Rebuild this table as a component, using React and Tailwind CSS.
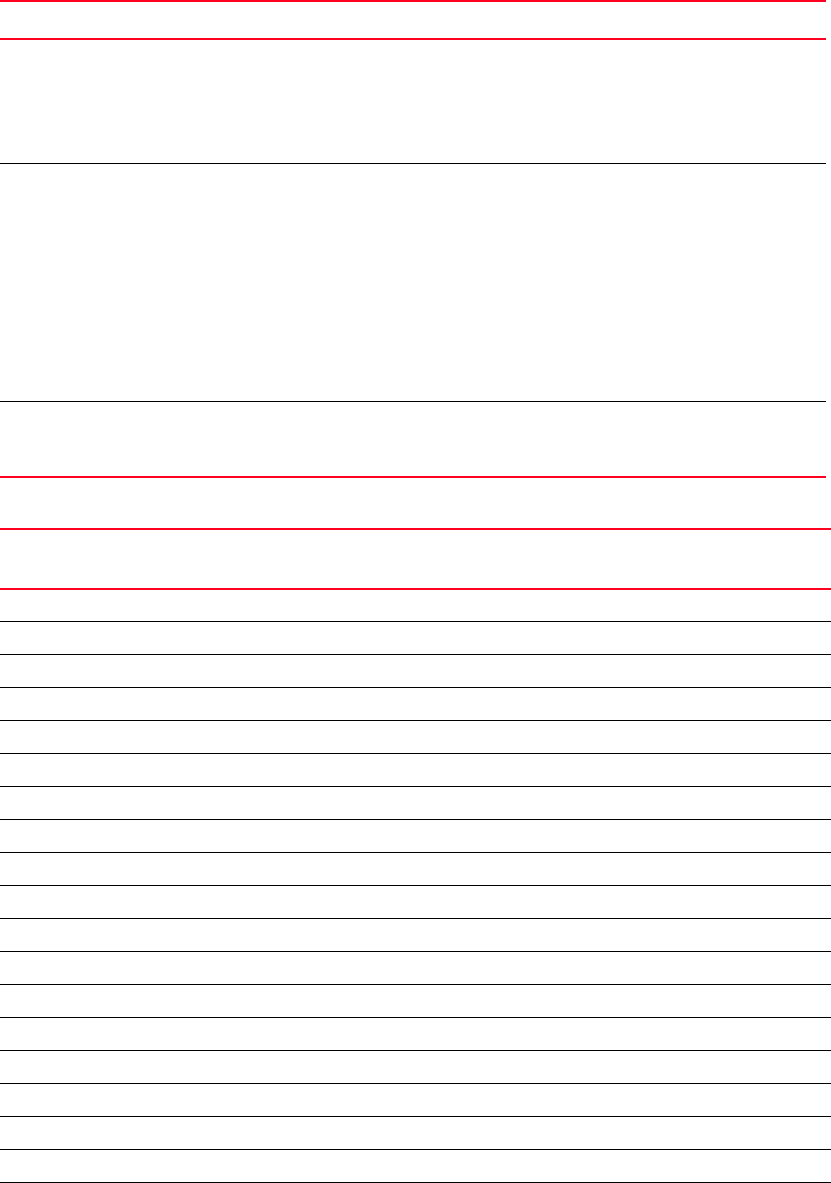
export default function App() {
  const rows = Array.from({ length: 17 });
  return (
    <div className="w-[831px] h-[1183px] bg-white overflow-hidden flex flex-col">
      <div className="w-[826px] flex flex-col">
        <div className="h-[38px] border-t-2 border-[#ff0020]" />
        <div className="h-[125px] border-t-2 border-[#ff0020]" />
        <div className="h-[238px] border-t border-black" />
        <div className="h-[75px] border-t border-black" />
        <div className="h-[52px] border-t-2 border-[#ff0020]" />
      </div>
      <div className="w-[831px] flex flex-col">
        <div className="h-[60px] border-t-2 border-[#ff0020]" />
        <div className="h-[33px] border-t-2 border-[#ff0020]" />
        {rows.map((_, i) => (
          <div key={i} className="h-[33px] border-t border-black" />
        ))}
        <div className="h-[1px] bg-black" />
      </div>
    </div>
  );
}
